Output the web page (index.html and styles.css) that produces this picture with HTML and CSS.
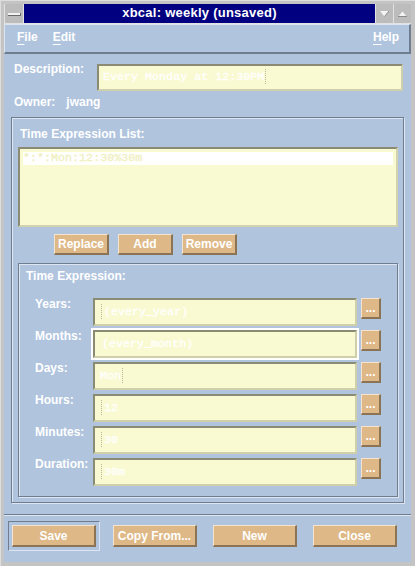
FILE: index.html
```html
<!DOCTYPE html>
<html lang="en">
<head>
    <meta charset="UTF-8">
    <title>xbcal: weekly (unsaved)</title>
    <link rel="stylesheet" href="styles.css">
</head>
<body>
    <div class="window">
        <div class="titlebar">
            <div class="wm-btn wm-min"><span class="dash"></span></div>
            <div class="title">xbcal: weekly (unsaved)</div>
            <div class="wm-btn">
                <svg width="9" height="6" viewBox="0 0 9 6"><polygon points="0,0 9,0 4.5,5.5" fill="#f4f4f4"/><line x1="4.5" y1="5.5" x2="9" y2="0" stroke="#8a8a8a" stroke-width="1"/></svg>
            </div>
            <div class="wm-btn">
                <svg width="9" height="6" viewBox="0 0 9 6"><polygon points="0,6 9,6 4.5,0.5" fill="#f4f4f4"/><line x1="0" y1="5.5" x2="9" y2="5.5" stroke="#8a8a8a" stroke-width="1"/></svg>
            </div>
        </div>

        <div class="client">
            <div class="menubar">
                <span class="menu"><u>F</u>ile</span>
                <span class="menu"><u>E</u>dit</span>
                <span class="menu menu-help"><u>H</u>elp</span>
            </div>

            <div class="desc-row">
                <div class="desc-label">Description:</div>
                <div class="field desc-field">Every Monday at 12:30PM<span class="caret"></span></div>
            </div>
            <div class="owner">Owner:<span class="owner-name">jwang</span></div>

            <div class="frame outer-frame">
                <div class="frame-title">Time Expression List:</div>
                <div class="list">
                    <div class="list-row selected">*:*:Mon:12:30%30m</div>
                </div>
                <div class="list-btns">
                    <button class="btn btn-small">Replace</button>
                    <button class="btn btn-small">Add</button>
                    <button class="btn btn-small">Remove</button>
                </div>

                <div class="frame inner-frame">
                    <div class="frame-title">Time Expression:</div>
                    <div class="expr-row">
                        <div class="expr-label">Years:</div>
                        <div class="field-wrap"><div class="field expr-field"><span class="caret"></span>(every_year)</div></div>
                        <button class="btn btn-more">...</button>
                    </div>
                    <div class="expr-row">
                        <div class="expr-label">Months:</div>
                        <div class="field-wrap focused"><div class="field expr-field indent">(every_month)</div></div>
                        <button class="btn btn-more">...</button>
                    </div>
                    <div class="expr-row">
                        <div class="expr-label">Days:</div>
                        <div class="field-wrap"><div class="field expr-field">Mon<span class="caret"></span></div></div>
                        <button class="btn btn-more">...</button>
                    </div>
                    <div class="expr-row">
                        <div class="expr-label">Hours:</div>
                        <div class="field-wrap"><div class="field expr-field"><span class="caret"></span>12</div></div>
                        <button class="btn btn-more">...</button>
                    </div>
                    <div class="expr-row">
                        <div class="expr-label">Minutes:</div>
                        <div class="field-wrap"><div class="field expr-field"><span class="caret"></span>30</div></div>
                        <button class="btn btn-more">...</button>
                    </div>
                    <div class="expr-row">
                        <div class="expr-label">Duration:</div>
                        <div class="field-wrap"><div class="field expr-field"><span class="caret"></span>30m</div></div>
                        <button class="btn btn-more">...</button>
                    </div>
                </div>
            </div>

            <div class="separator"></div>

            <div class="action-row">
                <div class="default-ring"><button class="btn btn-action">Save</button></div>
                <button class="btn btn-action btn-copy">Copy From...</button>
                <button class="btn btn-action">New</button>
                <button class="btn btn-action">Close</button>
            </div>
        </div>
    </div>
</body>
</html>
```

FILE: styles.css
```css
body {
    margin: 0;
    font-family: "Liberation Sans", Arial, sans-serif;
    font-weight: bold;
    font-size: 12px;
    line-height: 14px;
    color: #ffffff;
    background: #c4c4c4;
    overflow: hidden;
}
.window {
    width: 415px;
    height: 566px;
    box-sizing: border-box;
    padding: 3px 4px 4px 3px;
    display: flex;
    flex-direction: column;
    border-left: 1px solid #dedede;
    border-top: 1px solid #dedede;
    background: #c4c4c4;
}
.titlebar {
    display: flex;
    gap: 1px;
    height: 19px;
    padding-bottom: 1px;
    background: #e2e2e2;
    border-left: 1px solid #e2e2e2;
}
.wm-btn {
    width: 17px;
    background: #bcbcbc;
    display: flex;
    align-items: center;
    justify-content: center;
}
.wm-min {
    width: 18px;
}
.dash {
    display: block;
    width: 12px;
    height: 2px;
    background: #f2f2f2;
    border-bottom: 1px solid #6a6a6a;
    border-right: 1px solid #6a6a6a;
    margin-top: 1px;
}
.title {
    width: 351px;
    background: #000080;
    text-align: center;
    font-size: 13px;
    line-height: 18px;
    letter-spacing: 0.25px;
}
.client {
    flex: 1;
    background: #b0c4de;
}
.menubar {
    height: 30px;
    box-sizing: border-box;
    display: flex;
    padding: 5px 10px 0 12px;
    border-top: 1px solid #dce4ef;
    border-left: 1px solid #dce4ef;
    border-bottom: 2px solid #6e7d90;
    border-right: 2px solid #6e7d90;
}
.menu {
    margin-right: 15px;
}
.menu u {
    text-underline-offset: 3px;
}
.menu-help {
    margin-left: auto;
    margin-right: 0;
}
.desc-row {
    display: flex;
    margin-top: 8px;
    padding: 0 8px 0 10px;
}
.desc-label {
    width: 83px;
}
.field {
    box-sizing: border-box;
    background: #fafad2;
    border: 2px solid;
    border-color: #8b8b74 #cfcfab #cfcfab #8b8b74;
    font-family: "Liberation Mono", "Courier New", monospace;
    font-weight: normal;
    font-size: 11.7px;
    color: #ffffff;
    -webkit-text-stroke: 0.3px #ffffff;
    white-space: nowrap;
}
.desc-field {
    flex: 1;
    height: 27px;
    margin-top: 2px;
    padding-left: 4px;
    line-height: 23px;
}
.caret {
    display: inline-block;
    width: 1px;
    height: 15px;
    margin: 0 2px -4px 1px;
    background: repeating-linear-gradient(#b8b89e 0 1px, transparent 1px 2px);
}
.owner {
    margin-top: 4px;
    padding-left: 10px;
}
.owner-name {
    margin-left: 11px;
}
.frame {
    border: 1px solid #6e7d90;
    box-shadow: inset 1px 1px 0 #dce5f1, 1px 1px 0 #dce5f1;
}
.outer-frame {
    margin: 8px 7px 0 7px;
    padding: 9px 0 5px 0;
}
.outer-frame > .frame-title {
    padding-left: 8px;
}
.list {
    width: 380px;
    height: 80px;
    box-sizing: border-box;
    margin: 6px 0 0 6px;
    padding: 3px;
    background: #fafad2;
    border: 2px solid;
    border-color: #8b8b74 #d2d2ae #d2d2ae #8b8b74;
}
.list-row {
    height: 13px;
    line-height: 13px;
    font-family: "Liberation Mono", "Courier New", monospace;
    font-weight: normal;
    font-size: 11.7px;
    color: #f0f0c0;
    -webkit-text-stroke: 0.3px #f0f0c0;
}
.list-row.selected {
    background: #ffffff;
}
.list-btns {
    display: flex;
    gap: 9px;
    margin: 7px 0 0 42px;
}
.btn {
    box-sizing: border-box;
    padding: 0;
    background: #deb887;
    color: #ffffff;
    font-family: "Liberation Sans", Arial, sans-serif;
    font-weight: bold;
    font-size: 12px;
    border: 2px solid;
    border-color: #f4e4cf #8b7355 #8b7355 #f4e4cf;
    border-top-width: 1px;
    border-left-width: 1px;
    white-space: nowrap;
}
.btn-small {
    width: 55px;
    height: 21px;
}
.inner-frame {
    width: 380px;
    box-sizing: border-box;
    margin: 8px 0 0 6px;
    padding: 5px 0 8px 0;
}
.inner-frame > .frame-title {
    padding-left: 7px;
}
.inner-frame > .frame-title + .expr-row {
    margin-top: 13px;
}
.expr-row {
    display: flex;
    height: 32px;
    padding-left: 16px;
}
.expr-label {
    width: 56px;
    margin-top: 1px;
}
.field-wrap {
    padding: 2px;
}
.field-wrap.focused {
    background: #ffffff;
}
.expr-field {
    width: 264px;
    height: 28px;
    padding-left: 5px;
    line-height: 24px;
}
.expr-field.indent {
    padding-left: 7px;
}
.btn-more {
    width: 20px;
    height: 21px;
    margin: 2px 0 0 2px;
    line-height: 12px;
}
.separator {
    margin-top: 11px;
    border-top: 1px solid #6e7d90;
    border-bottom: 1px solid #dce5f1;
}
.action-row {
    display: flex;
    align-items: center;
    margin-top: 5px;
    padding-left: 4px;
}
.default-ring {
    padding: 3px;
    border: 1px solid;
    border-color: #6e7d90 #dce5f1 #dce5f1 #6e7d90;
    display: flex;
}
.btn-action {
    width: 84px;
    height: 22px;
    margin-left: 16px;
}
.default-ring .btn-action {
    margin-left: 0;
}
.btn-action.btn-copy {
    margin-left: 13px;
}
```
